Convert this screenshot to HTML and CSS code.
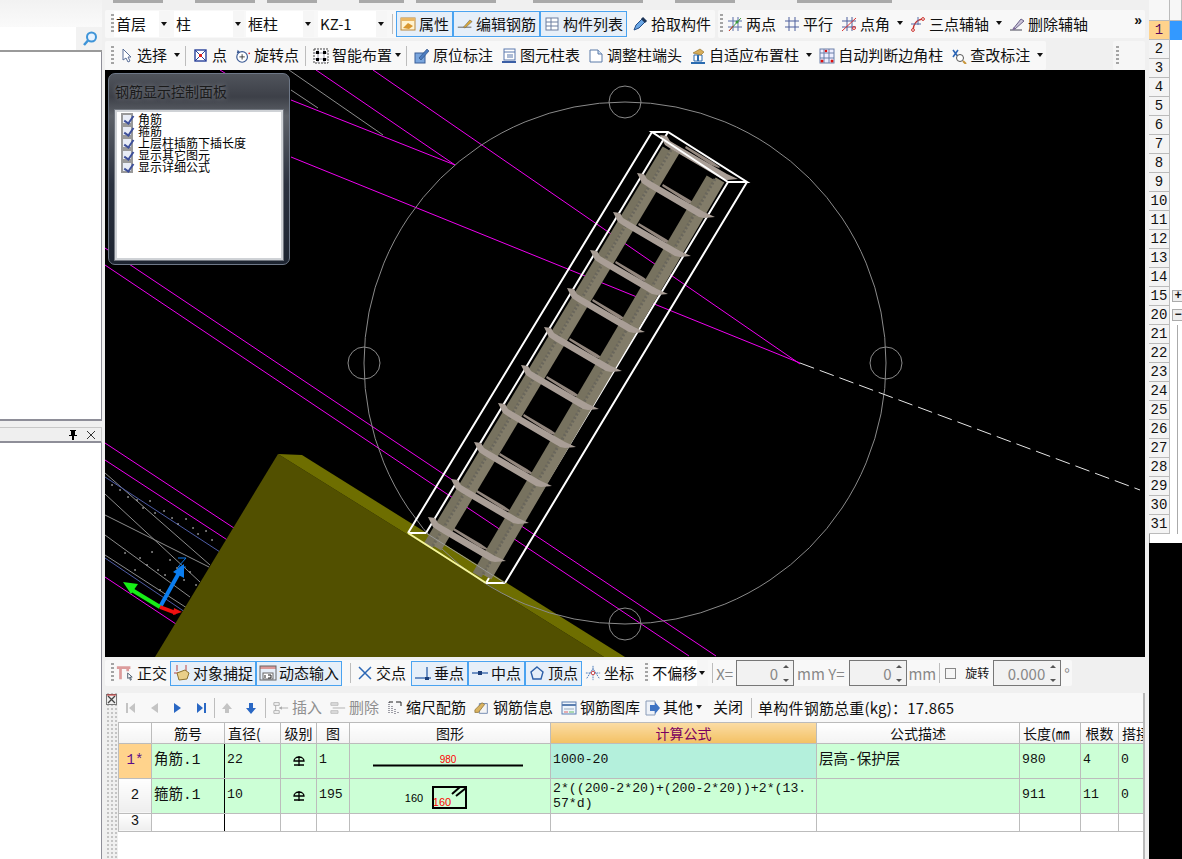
FILE: index.html
```html
<!DOCTYPE html>
<html lang="zh">
<head>
<meta charset="utf-8">
<title>钢筋三维</title>
<link rel="stylesheet" href="styles.css">
</head>
<body>
<svg class="defs" width="0" height="0">
  <defs>
    <symbol id="i-attr" viewBox="0 0 16 16"><rect x="1" y="2" width="14" height="12" fill="#fff3d0" stroke="#b9863a"/><rect x="1" y="2" width="14" height="3" fill="#e9b765"/><path d="M3 12l5-5 5 3-4 3z" fill="#d9972f"/></symbol>
    <symbol id="i-edit" viewBox="0 0 20 16"><path d="M1 12h17" stroke="#444" fill="none"/><path d="M8 12l8-9 3 2-9 8z" fill="#d8a93c" stroke="#555" stroke-width=".6"/></symbol>
    <symbol id="i-list" viewBox="0 0 16 16"><rect x="2" y="2" width="12" height="12" fill="#fff" stroke="#6c7fa0"/><path d="M7 2v12M2 6h12M2 10h12" stroke="#6c7fa0"/></symbol>
    <symbol id="i-pick" viewBox="0 0 16 16"><path d="M2 14l2-5 6-6 3 3-6 6z" fill="#6aa7e6" stroke="#244e88"/><path d="M10 2l4 4" stroke="#1d3558" stroke-width="3"/></symbol>
    <symbol id="i-two" viewBox="0 0 16 16"><path d="M1 5h14M1 11h14M6 1v14M11 1v14" stroke="#5b6ea8" fill="none"/><path d="M2 15L14 2" stroke="#3c9a3c"/><path d="M2 15l4-5" stroke="#d33"/><circle cx="10" cy="6" r="1.5" fill="#3a9a3a"/></symbol>
    <symbol id="i-par" viewBox="0 0 16 16"><path d="M1 5h14M1 11h14M5 1v14M11 1v14" stroke="#4d5f9c" fill="none"/></symbol>
    <symbol id="i-ang" viewBox="0 0 16 16"><path d="M1 5h14M1 11h14M6 1v14M11 1v14" stroke="#4d5f9c" fill="none"/><path d="M1 15L15 2" stroke="#d33"/><circle cx="13" cy="12" r="1.5" fill="none" stroke="#d33"/></symbol>
    <symbol id="i-arc" viewBox="0 0 16 16"><path d="M3 15C3 8 7 3 14 3" stroke="#c9302c" fill="none" stroke-width="1.3"/><path d="M1 8h10M8 1v8" stroke="#5b6ea8"/><circle cx="3" cy="14" r="1.4" fill="#fff" stroke="#c9302c"/><circle cx="13" cy="3" r="1.4" fill="#fff" stroke="#c9302c"/></symbol>
    <symbol id="i-del" viewBox="0 0 16 16"><path d="M1 14h12" stroke="#445"/><path d="M4 13l8-10 3 2-9 8z" fill="#c8c2d8" stroke="#6b6288"/><path d="M3 14l2-3 2 2z" fill="#7f6b9b"/></symbol>
    <symbol id="i-sel" viewBox="0 0 16 16"><path d="M5 1v11l3-2 2 4 2-1-2-4h3z" fill="#fff" stroke="#5a6f98"/></symbol>
    <symbol id="i-pt" viewBox="0 0 16 16"><rect x="2" y="2" width="11" height="11" fill="#fff" stroke="#29409a" stroke-width="1.4"/><path d="M2 2l11 11M13 2L2 13" stroke="#29409a"/><rect x="6" y="6" width="3" height="3" fill="#d22"/></symbol>
    <symbol id="i-rot" viewBox="0 0 18 16"><circle cx="8" cy="9" r="6" fill="#fff" stroke="#3b5a94" stroke-width="1.3"/><path d="M8 6v6M5 9h6" stroke="#333"/><path d="M3 1l3 3-4 1z" fill="#3b5a94"/><circle cx="16" cy="5" r="1" fill="#d33"/></symbol>
    <symbol id="i-smart" viewBox="0 0 16 16"><rect x="1" y="1" width="14" height="14" fill="#fff" stroke="#444" stroke-dasharray="2 1"/><path d="M5 1v14M11 1v14M1 5h14M1 11h14" stroke="#99a"/><rect x="3" y="3" width="3" height="3"/><rect x="10" y="3" width="3" height="3"/><rect x="3" y="10" width="3" height="3"/><rect x="10" y="10" width="3" height="3"/></symbol>
    <symbol id="i-mark" viewBox="0 0 16 16"><rect x="1" y="5" width="10" height="10" fill="#7aa6de" stroke="#3a5f98"/><path d="M5 10l8-9 2 2-8 9z" fill="#4c7cc0" stroke="#28497c" stroke-width=".6"/></symbol>
    <symbol id="i-tab" viewBox="0 0 16 16"><rect x="3" y="1" width="11" height="11" fill="#fff" stroke="#5a79ad"/><path d="M3 4h11M6 7h6M6 9h6" stroke="#5a79ad"/><path d="M1 13h14v2H1z" fill="#3b5fa5"/></symbol>
    <symbol id="i-end" viewBox="0 0 16 16"><path d="M2 2h8l4 4v8H2z" fill="#fff" stroke="#5b7ba8"/><path d="M10 2v4h4" fill="#cfe0f4" stroke="#5b7ba8"/></symbol>
    <symbol id="i-adapt" viewBox="0 0 16 16"><path d="M4 7h8v6H4z" fill="#fff" stroke="#2a6bb0"/><path d="M1 14h14v2H1zM7 7h2v6H7z" fill="#2a6bb0"/><path d="M3 5l7-4 4 3-3 3z" fill="#d7ad5a" stroke="#8c6a22" stroke-width=".6"/></symbol>
    <symbol id="i-corner" viewBox="0 0 16 16"><rect x="1" y="1" width="14" height="14" fill="#eef" stroke="#6a7fa8"/><path d="M5 1v14M10 1v14M1 5h14M1 10h14" stroke="#6a7fa8"/><circle cx="7" cy="3" r="1.3" fill="#d11"/><circle cx="3" cy="13" r="1.5" fill="#d11"/><circle cx="13" cy="13" r="1.5" fill="#d11"/></symbol>
    <symbol id="i-check" viewBox="0 0 16 16"><path d="M2 2l6 8M2 9l5-7" stroke="#2d66b5" stroke-width="1.6"/><circle cx="9" cy="10" r="3.5" fill="#fff" stroke="#555"/><path d="M12 13l3 3" stroke="#c9973c" stroke-width="2"/></symbol>
    <symbol id="i-ortho" viewBox="0 0 20 18"><path d="M1 3h15M5 3v13M13 3v4" stroke="#dc9c9c" stroke-width="3" fill="none"/><path d="M13 9v6l2-1 1 3 1-.5-1-3h2z" fill="#fff" stroke="#456"/></symbol>
    <symbol id="i-snap" viewBox="0 0 18 18"><path d="M4 1v6M13 1v6M1 9h9" stroke="#b44" fill="none"/><path d="M4 9l8-3 4 3-2 6-8 1z" fill="#e9cf88" stroke="#8d7330"/></symbol>
    <symbol id="i-dyn" viewBox="0 0 18 18"><rect x="1" y="2" width="16" height="3" fill="#d99"/><rect x="1" y="2" width="16" height="14" fill="none" stroke="#666"/><rect x="4" y="9" width="10" height="6" fill="#fff" stroke="#666"/><path d="M6 11v3M9 11h3v3h-3" stroke="#222" fill="none"/></symbol>
    <symbol id="i-cross" viewBox="0 0 16 16"><path d="M2 2l12 12M14 2L2 14" stroke="#2c67b5" stroke-width="1.5"/></symbol>
    <symbol id="i-perp" viewBox="0 0 16 16"><path d="M0 13h16" stroke="#2c5fa8" stroke-width="1.3"/><path d="M12 2v11" stroke="#2c5fa8" stroke-width="1.3"/><rect x="10" y="12" width="4" height="3" fill="#1d3f7a"/></symbol>
    <symbol id="i-mid" viewBox="0 0 16 16"><path d="M0 8h16" stroke="#2c5fa8" stroke-width="1.3"/><rect x="6" y="6" width="4" height="4" fill="#1d3f7a"/></symbol>
    <symbol id="i-top" viewBox="0 0 16 16"><path d="M8 2l6 5-2 7H4L2 7z" fill="none" stroke="#2c5fa8" stroke-width="1.4"/></symbol>
    <symbol id="i-coord" viewBox="0 0 18 18"><path d="M2 15l7-11 7 11" fill="none" stroke="#3a6fb5" stroke-dasharray="2 1"/><path d="M1 9h16M9 1v16" stroke="#3a6fb5" stroke-dasharray="2 1"/><circle cx="9" cy="9" r="2" fill="#fff" stroke="#c33"/></symbol>
    <symbol id="i-first" viewBox="0 0 12 14"><path d="M2 2h2v10H2z"/><path d="M11 2v10L5 7z"/></symbol>
    <symbol id="i-prev" viewBox="0 0 12 14"><path d="M10 2v10L3 7z"/></symbol>
    <symbol id="i-next" viewBox="0 0 12 14"><path d="M2 2v10l7-5z"/></symbol>
    <symbol id="i-last" viewBox="0 0 12 14"><path d="M1 2v10l6-5z"/><path d="M8 2h2v10H8z"/></symbol>
    <symbol id="i-up" viewBox="0 0 12 14"><path d="M6 2l5 6H8v4H4V8H1z"/></symbol>
    <symbol id="i-down" viewBox="0 0 12 14"><path d="M4 2h4v5h3l-5 6-5-6h3z"/></symbol>
    <symbol id="i-ins" viewBox="0 0 18 16"><path d="M1 2h6v3H1zM1 11h6v3H1z" fill="none" stroke="#aaa"/><path d="M7 8h10M3 5v6" stroke="#aaa" fill="none"/><path d="M7 8l3-2v4z" fill="#aaa"/></symbol>
    <symbol id="i-rem" viewBox="0 0 18 16"><path d="M1 2h8v3H1zM1 11h8v3H1z" fill="#ddd" stroke="#bbb"/><path d="M3 8h14" stroke="#aaa"/></symbol>
    <symbol id="i-scale" viewBox="0 0 16 16"><path d="M2 2v12M5 6v8M8 9v5M11 12v2" stroke="#445" stroke-dasharray="1 1"/><path d="M2 2h4M9 2h5v4" stroke="#222" fill="none"/></symbol>
    <symbol id="i-info" viewBox="0 0 18 16"><path d="M6 3l9 0v11H6z" fill="#f4f4f4" stroke="#6b84ad"/><path d="M1 10l8-8 3 2-7 9H1z" fill="#d9b361" stroke="#7a5f22" stroke-width=".7"/></symbol>
    <symbol id="i-lib" viewBox="0 0 16 16"><rect x="1" y="2" width="14" height="12" fill="#eef4fb" stroke="#5c7fb0"/><path d="M1 5h14" stroke="#5c7fb0" stroke-width="2"/><path d="M3 9h10" stroke="#9ab"/><path d="M3 12h4" stroke="#d66"/><path d="M8 12h5" stroke="#6b6"/></symbol>
    <symbol id="i-other" viewBox="0 0 16 16"><path d="M2 1h9v14H2z" fill="#eef2f8" stroke="#8a9cb8"/><path d="M6 5h5V2l5 6-5 6v-3H6z" fill="#3f74c4"/></symbol>
    <path id="st-back" d="M26 11l27 16 7 5-1 1-8-3-26-17z" fill="#93877e"/>
    <path id="st-front" d="M0 0l7 1 3 5 5 3 52 30 11 5-11 1-5-1-51-30-6-4z" fill="#a99e96"/>
  </defs>
</svg>

<div class="app">
  <aside class="left">
    <div class="left-top"></div>
    <div class="search">
      <div class="search-input"></div>
      <svg class="search-ic" width="18" height="18" viewBox="0 0 18 18"><circle cx="10.5" cy="7" r="4.5" fill="#e7f3ff" stroke="#3e94d8" stroke-width="2"/><path d="M7 10.500l-4 4.500" stroke="#3e94d8" stroke-width="2.500"/></svg>
    </div>
    <div class="pane pane-a"></div>
    <div class="pane-head">
      <svg width="10" height="10" viewBox="0 0 10 10"><path d="M2 0h6v1H7v4h2v1H6v4H4V6H1V5h2V1H2z"/></svg>
      <svg width="10" height="10" viewBox="0 0 10 10"><path d="M1 1l8 8M9 1L1 9" stroke="#333" fill="none"/></svg>
    </div>
    <div class="pane pane-b"></div>
  </aside>

  <main class="main">
    <div class="clip-strip">
      <span class="bit b1"></span><span class="bit b2"></span><span class="bit b3"></span><span class="bit b4"></span><span class="bit b5"></span><span class="bit b6"></span><span class="bit b7"></span><span class="bit b8"></span>
    </div>

    <div class="row-1">
      <div class="bar bar-a">
        <i class="grip"></i>
        <div class="combo w56"><span>首层</span><b></b></div>
        <div class="combo w71"><span>柱</span><b></b></div>
        <div class="combo w68"><span>框柱</span><b></b></div>
        <div class="combo w69"><span>KZ-1</span><b></b></div>
        <i class="sep"></i>
        <button class="btn on"><svg class="ic"><use href="#i-attr"/></svg>属性</button>
        <button class="btn on"><svg class="ic"><use href="#i-edit"/></svg>编辑钢筋</button>
        <button class="btn on"><svg class="ic"><use href="#i-list"/></svg>构件列表</button>
        <button class="btn pick"><svg class="ic"><use href="#i-pick"/></svg>拾取构件</button>
      </div>
      <div class="bar bar-b">
        <i class="grip"></i>
        <button class="btn flat"><svg class="ic"><use href="#i-two"/></svg>两点</button>
        <button class="btn flat"><svg class="ic"><use href="#i-par"/></svg>平行</button>
        <button class="btn flat"><svg class="ic"><use href="#i-ang"/></svg>点角<u class="arrow"></u></button>
        <button class="btn flat"><svg class="ic"><use href="#i-arc"/></svg>三点辅轴<u class="arrow"></u></button>
        <button class="btn flat"><svg class="ic"><use href="#i-del"/></svg>删除辅轴</button>
        <span class="more">»</span>
      </div>
    </div>

    <div class="row-2">
      <div class="bar bar-c">
        <i class="grip"></i>
        <button class="btn flat"><svg class="ic"><use href="#i-sel"/></svg>选择<u class="arrow"></u></button>
        <i class="sep"></i>
        <button class="btn flat"><svg class="ic"><use href="#i-pt"/></svg>点</button>
        <button class="btn flat"><svg class="ic"><use href="#i-rot"/></svg>旋转点</button>
        <i class="sep"></i>
        <button class="btn flat"><svg class="ic"><use href="#i-smart"/></svg>智能布置<u class="arrow mini"></u></button>
        <i class="sep"></i>
        <button class="btn flat"><svg class="ic"><use href="#i-mark"/></svg>原位标注</button>
        <button class="btn flat"><svg class="ic"><use href="#i-tab"/></svg>图元柱表</button>
        <button class="btn flat"><svg class="ic"><use href="#i-end"/></svg>调整柱端头</button>
        <button class="btn flat"><svg class="ic"><use href="#i-adapt"/></svg>自适应布置柱<u class="arrow"></u></button>
        <button class="btn flat"><svg class="ic"><use href="#i-corner"/></svg>自动判断边角柱</button>
        <button class="btn flat"><svg class="ic"><use href="#i-check"/></svg>查改标注<u class="arrow"></u></button>
      </div>
      <div class="bar bar-d"><i class="grip"></i></div>
    </div>

    <div class="canvas">
      <svg class="scene" width="1040" height="587" viewBox="105 70 1040 587">
        <rect x="105" y="70" width="1040" height="587" fill="#000"/>
        <g class="mag">
          <path d="M373 70L800 364M291 157L800 363"/>
          <path d="M316 70L455 165M291 100L455 165M220 70L228 75"/>
          <path d="M105 265L689 656M105 248L716 656"/>
          <path d="M105 443L240 532M105 460L232 543M105 577L176 624"/>
        </g>
        <g class="gray">
          <path d="M289 70L383 135M291 90L318 108"/>
          <path d="M105 473L210 565M105 494L200 582M105 515L209 567M105 535L190 597M105 555L190 610"/>
        </g>
        <g class="blue">
          <path d="M105 477L220 552M105 558L185 612"/>
        </g>
        <path class="dots" d="M112 485h.1M120 490h.1M128 497h.1M137 500h.1M143 508h.1M150 501h.1M155 513h.1M164 511h.1M172 518h.1M178 524h.1M186 519h.1M193 528h.1M198 534h.1M206 531h.1M212 540h.1M140 558h.1M147 565h.1M152 552h.1M158 570h.1M165 575h.1M170 560h.1M177 568h.1M184 580h.1M190 572h.1M196 585h.1M135 570h.1M125 553h.1M160 590h.1"/>

        <polygon points="278,454 155,657 604,657" fill="#525000"/>
        <polygon points="278,454 302,455 625,657 604,657" fill="#6e6e00"/>

        <circle class="ring" cx="625" cy="363" r="261"/>
        <circle class="ring" cx="625" cy="102" r="16"/>
        <circle class="ring" cx="364" cy="363" r="16"/>
        <circle class="ring" cx="886" cy="363" r="16"/>
        <circle class="ring" cx="625" cy="624" r="16"/>

        <path class="dash" d="M800 363L1140 490"/>

        <g class="wire">
          <path d="M668 132L426 533M728 182L486 583"/>
        </g>
        <use href="#st-back" x="660" y="135"/>
        <use href="#st-back" x="637" y="173"/>
        <use href="#st-back" x="613" y="212"/>
        <use href="#st-back" x="590" y="250"/>
        <use href="#st-back" x="567" y="288"/>
        <use href="#st-back" x="544" y="327"/>
        <use href="#st-back" x="521" y="365"/>
        <use href="#st-back" x="498" y="403"/>
        <use href="#st-back" x="474" y="442"/>
        <use href="#st-back" x="451" y="479"/>
        <use href="#st-back" x="428" y="517"/>
        <g class="bar1"><path d="M667 149L428 546"/><path d="M675 151L437 548"/><path class="grain" d="M671 150L432 547"/></g>
        <g class="bar1"><path d="M711 178L477 575"/><path d="M720 180L487 577"/><path class="grain" d="M715 179L482 576"/></g>
        <use href="#st-front" x="660" y="135"/>
        <use href="#st-front" x="637" y="173"/>
        <use href="#st-front" x="613" y="212"/>
        <use href="#st-front" x="590" y="250"/>
        <use href="#st-front" x="567" y="288"/>
        <use href="#st-front" x="544" y="327"/>
        <use href="#st-front" x="521" y="365"/>
        <use href="#st-front" x="498" y="403"/>
        <use href="#st-front" x="474" y="442"/>
        <use href="#st-front" x="451" y="479"/>
        <use href="#st-front" x="428" y="517"/>
        <g class="wire">
          <path d="M652 132L408 533M747 182L505 583"/>
          <path d="M652 132H668L747 182H728Z"/>
          <path d="M408 533H426M486 583H505"/>
          <path d="M426 533L505 583" class="faint"/>
        </g>
        <path d="M408 533L486 583" stroke="#f5f59a" stroke-width="2" fill="none"/>

        <g class="axis">
          <path d="M160 607L180 571" stroke="#0a7df0" stroke-width="4"/>
          <path d="M184 564L173 572 184 578z" fill="#0a7df0"/>
          <path d="M178 558h8l-8 9h8" stroke="#0a7df0" fill="none"/>
          <path d="M160 607L132 590" stroke="#17ee17" stroke-width="4"/>
          <path d="M123 582L138 584 131 594z" fill="#17ee17"/>
          <path d="M160 607L176 613" stroke="#f01010" stroke-width="4"/>
          <path d="M182 612l-8-4-1 7z" fill="#f01010"/>
        </g>
      </svg>

      <section class="float-panel">
        <h2 class="float-title">钢筋显示控制面板</h2>
        <ul class="check-list">
          <li><i class="cb"></i>角筋</li>
          <li><i class="cb"></i>箍筋</li>
          <li><i class="cb"></i>上层柱插筋下插长度</li>
          <li><i class="cb"></i>显示其它图元</li>
          <li><i class="cb"></i>显示详细公式</li>
        </ul>
      </section>
    </div>

    <div class="row-3">
      <div class="bar bar-e">
        <i class="grip"></i>
        <button class="btn flat"><svg class="ic wide"><use href="#i-ortho"/></svg>正交</button>
        <button class="btn on wd lead"><svg class="ic wide"><use href="#i-snap"/></svg>对象捕捉</button>
        <button class="btn on wd"><svg class="ic wide"><use href="#i-dyn"/></svg>动态输入</button>
        <i class="sep s1"></i>
        <button class="btn flat"><svg class="ic"><use href="#i-cross"/></svg>交点</button>
        <button class="btn on lead gap2"><svg class="ic"><use href="#i-perp"/></svg>垂点</button>
        <button class="btn on"><svg class="ic"><use href="#i-mid"/></svg>中点</button>
        <button class="btn on"><svg class="ic"><use href="#i-top"/></svg>顶点</button>
        <button class="btn flat"><svg class="ic"><use href="#i-coord"/></svg>坐标</button>
        <i class="grip g2"></i>
        <div class="combo w58"><span>不偏移</span><b></b></div>
        <i class="sep"></i>
        <span class="dim">X=</span>
        <div class="spin w58"><span>0</span><em></em></div>
        <span class="dim">mm Y=</span>
        <div class="spin w58 sp2"><span>0</span><em></em></div>
        <span class="dim mm2">mm</span>
        <i class="sep"></i>
        <i class="box"></i>
        <span class="small">旋转</span>
        <div class="spin w68"><span>0.000</span><em></em></div>
        <span class="dim">°</span>
      </div>
    </div>

    <div class="lower">
      <div class="dock-grip"><svg width="11" height="11" viewBox="0 0 11 11"><rect x=".5" y=".5" width="10" height="10" fill="#eee" stroke="#777"/><path d="M2 2l7 7M9 2L2 9" stroke="#444" stroke-width="1.300"/><path d="M1 1h9" stroke="#c33"/></svg></div>
      <div class="lower-body">
        <div class="bar bar-f">
          <button class="nav off"><svg><use href="#i-first"/></svg></button>
          <button class="nav off"><svg><use href="#i-prev"/></svg></button>
          <button class="nav go"><svg><use href="#i-next"/></svg></button>
          <button class="nav go"><svg><use href="#i-last"/></svg></button>
          <i class="sep"></i>
          <button class="nav off"><svg><use href="#i-up"/></svg></button>
          <button class="nav go"><svg><use href="#i-down"/></svg></button>
          <i class="sep s3"></i>
          <button class="btn flat mute"><svg class="ic"><use href="#i-ins"/></svg>插入</button>
          <button class="btn flat mute"><svg class="ic"><use href="#i-rem"/></svg>删除</button>
          <button class="btn flat"><svg class="ic"><use href="#i-scale"/></svg>缩尺配筋</button>
          <button class="btn flat"><svg class="ic"><use href="#i-info"/></svg>钢筋信息</button>
          <button class="btn flat lib"><svg class="ic"><use href="#i-lib"/></svg>钢筋图库</button>
          <button class="btn flat oth"><svg class="ic"><use href="#i-other"/></svg>其他<u class="arrow mini"></u></button>
          <button class="btn flat"><span>关闭</span></button>
          <i class="sep"></i>
          <span class="total">单构件钢筋总重(kg)：17.865</span>
        </div>
        <div class="table-wrap">
          <table class="grid">
            <colgroup>
              <col class="c0"><col class="c1"><col class="c2"><col class="c3"><col class="c4"><col class="c5"><col class="c6"><col class="c7"><col class="c8"><col class="c9"><col class="c10">
            </colgroup>
            <thead>
              <tr>
                <th></th><th>筋号</th><th class="cut">直径(</th><th>级别</th><th>图</th><th>图形</th><th class="cur">计算公式</th><th>公式描述</th><th class="cut">长度(㎜</th><th>根数</th><th class="cut">搭接</th>
              </tr>
            </thead>
            <tbody>
              <tr class="r1">
                <th class="now">1*</th><td>角筋.1</td><td>22</td><td class="mid"><svg class="grade" width="14" height="12" viewBox="0 0 14 12"><path d="M2 6a5 4 0 0 1 10 0zM7 1v10M2 10h10" fill="none" stroke="#000" stroke-width="1.300"/></svg></td><td>1</td>
                <td class="fig"><svg width="200" height="34" viewBox="0 0 200 34"><text x="98" y="19" class="red">980</text><path d="M23 21.500H173" stroke="#000" stroke-width="2"/></svg></td>
                <td class="sel">1000-20</td><td>层高-保护层</td><td>980</td><td>4</td><td>0</td>
              </tr>
              <tr class="r2">
                <th>2</th><td>箍筋.1</td><td>10</td><td class="mid"><svg class="grade" width="14" height="12" viewBox="0 0 14 12"><path d="M2 6a5 4 0 0 1 10 0zM7 1v10M2 10h10" fill="none" stroke="#000" stroke-width="1.300"/></svg></td><td>195</td>
                <td class="fig"><svg width="200" height="34" viewBox="0 0 200 34"><text x="64" y="23" class="blk">160</text><rect x="83" y="8" width="33" height="21" fill="none" stroke="#000" stroke-width="2"/><path d="M116 9l-10 8M110 8l-8 7" stroke="#000" stroke-width="2"/><text x="92" y="27" class="red big">160</text></svg></td>
                <td class="wrap">2*((200-2*20)+(200-2*20))+2*(13.57*d)</td><td></td><td>911</td><td>11</td><td>0</td>
              </tr>
              <tr class="r3">
                <th>3</th><td></td><td></td><td></td><td></td><td></td><td></td><td></td><td></td><td></td><td></td>
              </tr>
            </tbody>
          </table>
        </div>
      </div>
    </div>
  </main>

  <aside class="sheet">
    <div class="sheet-rows">
      <div class="s-head"><span></span><span></span></div>
      <div class="s-row cur"><span>1</span><span></span></div>
      <div class="s-row"><span>2</span><span></span></div>
      <div class="s-row"><span>3</span><span></span></div>
      <div class="s-row"><span>4</span><span></span></div>
      <div class="s-row"><span>5</span><span></span></div>
      <div class="s-row"><span>6</span><span></span></div>
      <div class="s-row"><span>7</span><span></span></div>
      <div class="s-row"><span>8</span><span></span></div>
      <div class="s-row"><span>9</span><span></span></div>
      <div class="s-row"><span>10</span><span></span></div>
      <div class="s-row"><span>11</span><span></span></div>
      <div class="s-row"><span>12</span><span></span></div>
      <div class="s-row"><span>13</span><span></span></div>
      <div class="s-row"><span>14</span><span></span></div>
      <div class="s-row"><span>15</span><span><i class="tree">+</i></span></div>
      <div class="s-row"><span>20</span><span><i class="tree">−</i></span></div>
      <div class="s-row line"><span>21</span><span></span></div>
      <div class="s-row line"><span>22</span><span></span></div>
      <div class="s-row line"><span>23</span><span></span></div>
      <div class="s-row line"><span>24</span><span></span></div>
      <div class="s-row line"><span>25</span><span></span></div>
      <div class="s-row line"><span>26</span><span></span></div>
      <div class="s-row line"><span>27</span><span></span></div>
      <div class="s-row line"><span>28</span><span></span></div>
      <div class="s-row line"><span>29</span><span></span></div>
      <div class="s-row line"><span>30</span><span></span></div>
      <div class="s-row line"><span>31</span><span></span></div>
    </div>
  </aside>
</div>
</body>
</html>
```
FILE: styles.css
```css
* { box-sizing: border-box; }
html, body { margin: 0; padding: 0; width: 1182px; height: 859px; overflow: hidden; background: #000; }
body { font: 15px/1 "Noto Sans CJK SC", "Liberation Sans", sans-serif; color: #111; }
.defs { position: absolute; }
.app { display: flex; width: 1182px; height: 859px; }

/* left dock */
.left { width: 105px; height: 859px; flex: none; background: #f0f0f0; display: flex; flex-direction: column; padding-right: 3px; }
.left-top { height: 27px; background: linear-gradient(#f2f2f2, #fafafa); }
.search { height: 25px; display: flex; align-items: center; background: #f2f2f2; border-bottom: 2px solid #9a9a9a; }
.search-input { width: 76px; height: 23px; background: #fff; }
.search-ic { margin-left: 5px; }
.pane { background: #fff; border-right: 1px solid #8e8e98; }
.pane-a { height: 369px; border-bottom: 2px solid #8e8e98; }
.pane-head { height: 16px; margin-top: 6px; display: flex; align-items: center; justify-content: flex-end; gap: 8px; padding-right: 5px; background: #efefef; border-top: 1px solid #c8c8c8; border-bottom: 2px solid #8e8e98; border-right: 1px solid #c8c8c8; }
.pane-b { flex: 1; }

/* main column */
.main { width: 1040px; height: 859px; flex: none; display: flex; flex-direction: column; background: #f0f0f0; }
.clip-strip { height: 10px; display: flex; gap: 12px; padding: 0 0 0 8px; }
.bit { display: block; height: 3px; background: #a9a9a9; }
.b1 { width: 50px; } .b2 { width: 60px; margin-left: 20px; } .b3 { width: 50px; } .b4 { width: 45px; margin-left: 30px; }
.b5 { width: 80px; } .b6 { width: 110px; margin-left: 25px; } .b7 { width: 60px; margin-left: 20px; } .b8 { width: 95px; margin-left: 50px; }

.bar { display: flex; align-items: center; background: #f8f8f8; border-radius: 2px; height: 100%; }
.row-1 { height: 28px; display: flex; gap: 3px; }
.row-2 { height: 29px; margin-top: 3px; display: flex; justify-content: space-between; }
.row-3 { height: 33px; padding: 3px 0 4px; }
.bar-a { width: 610px; padding-left: 6px; }
.bar-b { flex: 1; padding-left: 2px; gap: 8px; position: relative; }
.bar-c { width: 941px; padding-left: 6px; gap: 8px; }
.bar-d { width: 32px; padding-left: 3px; background: #f6f6f6; }
.bar-e { width: 967px; padding-left: 6px; gap: 3px; }
.bar-f { height: 29px; padding-left: 0; }

.grip { display: block; width: 3px; height: 20px; flex: none; background: repeating-linear-gradient(#a4a4a4 0 2px, transparent 2px 4px); }
.sep { display: block; width: 1px; height: 20px; flex: none; background: #bdbdbd; }

.combo { height: 26px; display: flex; align-items: center; justify-content: space-between; background: #fff; font-size: 15px; padding-left: 2px; flex: none; }
.combo span { margin-top: -2px; white-space: nowrap; }
.combo b { display: block; width: 11px; height: 26px; background: #f6f6f6; position: relative; flex: none; }
.combo b::after { content: ""; position: absolute; left: 2px; top: 11px; border: 3px solid transparent; border-top: 4px solid #111; border-bottom: 0; }
.w56 { width: 56px; } .w71 { width: 70px; margin-left: 4px; } .w68 { width: 68px; margin-left: 2px; } .w69 { width: 69px; margin-left: 4px; }
.bar-a .sep { margin: 0 3px 0 5px; }
.bar-b .grip { margin-right: -4px; }
.bar-c > .grip { margin-right: -4px; }
.bar-c > .sep { margin: 0 -1px 0 -2px; }

.btn { font: inherit; color: inherit; background: none; border: 1px solid transparent; display: flex; align-items: center; gap: 3px; padding: 0 3px 2px; height: 26px; margin: 0; white-space: nowrap; flex: none; }
.btn.on { background: #e6eff9; border-color: #4aa3f0; }
.btn.flat { padding: 0 0 2px; border: 0; }
.btn.mute { color: #8f8f8f; }
.btn.pick { margin-left: 5px; padding: 0 0 2px; border: 0; }
.ic { width: 16px; height: 16px; flex: none; margin-top: 2px; }
.ic.wide { width: 18px; height: 18px; }
.arrow { display: block; width: 12px; height: 8px; position: relative; flex: none; }
.btn .arrow { margin-left: -3px; margin-right: 0; }
.arrow::after { content: ""; position: absolute; left: 7px; top: 2px; border: 3px solid transparent; border-top: 4px solid #111; border-bottom: 0; }
.btn .arrow.mini { width: 8px; margin-left: -3px; }
.arrow.mini::after { left: 3px; }
.more { position: absolute; right: 3px; top: 3px; font: bold 14px/1 "Liberation Sans", sans-serif; }

/* canvas */
.canvas { height: 587px; position: relative; background: #000; overflow: hidden; flex: none; }
.scene { display: block; }
.mag path { stroke: #f000f0; fill: none; }
.gray path { stroke: #8c8c8c; fill: none; }
.blue path { stroke: #4e5ca6; fill: none; }
.dots { stroke: #aaa; stroke-width: 1.500; stroke-linecap: square; fill: none; }
.ring { fill: none; stroke: #8a8a8a; }
.dash { stroke: #e6e6e6; stroke-dasharray: 15 6; fill: none; }
.wire path { stroke: #fff; stroke-width: 2; fill: none; }
.wire .faint { stroke: #999; stroke-width: 1; }
.bar1 path { stroke: #77725f; stroke-width: 10; fill: none; }
.bar1 path + path { stroke: #827c69; }
.bar1 .grain { stroke: #6a675c; stroke-width: 3; stroke-dasharray: 2 2; }

.float-panel { position: absolute; left: 3px; top: 3px; width: 182px; height: 192px; border: 1px solid #6e7888; border-radius: 7px; padding: 0 6px; background: linear-gradient(#50545c, #3d4048 12%, #5d6168 22%, #2b3240 58%, #1d2430); }
.float-title { margin: 8px 0 10px; font: 400 14px/18px "Noto Sans CJK SC", sans-serif; color: #1a1a1a; text-shadow: 0 0 5px #8a8e96; }
.check-list { margin: 0; list-style: none; height: 150px; padding: 1px 4px; background: #fff; border: 2px solid #cfd2d6; outline: 1px solid #70757e; }
.check-list li { height: 12px; display: flex; align-items: center; gap: 5px; font-size: 12px; line-height: 12px; color: #000; white-space: nowrap; }
.cb { display: block; width: 12px; height: 12px; flex: none; border: 2px solid #999; background: #e8ecf6; position: relative; }
.cb::after { content: ""; position: absolute; left: 3px; top: -1px; width: 4px; height: 8px; border: solid #3d4f9a; border-width: 0 2px 2px 0; transform: rotate(35deg); }

/* snap bar */
.bar-e > .grip:first-child { margin-right: -1px; }
.bar-e .btn { height: 25px; }
.bar-e .btn.on { margin-left: -3px; }
.bar-e .btn.wd { padding: 0 2px 2px; gap: 2px; }
.bar-e .btn.lead { margin-left: 0; }
.bar-e .btn.gap2 { margin-left: 2px; }
.bar-e > .sep { margin: 0; }
.bar-e > .sep.s1 { margin: 0 3px 0 5px; }
.bar-e > .g2 { margin: 0 -1px 0 8px; }
.bar-e .combo { height: 26px; width: 58px; margin: 0 1px 0 0; overflow: hidden; }
.dim { color: #888; white-space: nowrap; flex: none; }
.dim.mm2 { margin-left: -2px; }
.small { font-size: 12px; margin: 0 1px 0 6px; white-space: nowrap; flex: none; }
.box { display: block; width: 11px; height: 11px; border: 1px solid #888; background: #f6f6f6; flex: none; margin-left: 2px; }
.spin { height: 26px; border: 1px solid #777; background: #f2f2f2; color: #888; display: flex; align-items: center; justify-content: flex-end; padding-right: 15px; position: relative; flex: none; }
.spin.w58 { width: 58px; margin: 0; }
.spin.w58.sp2 { margin-left: 2px; }
.spin.w68 { width: 68px; margin: 0; }
.spin em { position: absolute; right: 3px; top: 3px; width: 8px; height: 18px; }
.spin em::before, .spin em::after { content: ""; position: absolute; left: 1px; border: 3px solid transparent; }
.spin em::before { top: 1px; border-bottom: 3px solid #555; border-top: 0; }
.spin em::after { bottom: 0; border-top: 3px solid #555; border-bottom: 0; }

/* lower */
.lower { flex: 1; display: flex; min-height: 0; padding-top: 3px; }
.dock-grip { width: 13px; padding: 1px 0 0 1px; background: #f0f0f0 radial-gradient(circle, #c4c4c4 1px, transparent 1.200px) 1px 10px / 4px 4px; flex: none; }
.dock-grip svg { display: block; }
.lower-body { width: 1027px; flex: none; display: flex; flex-direction: column; min-height: 0; border-right: 2px solid #b8b8b8; }
.nav { width: 24px; height: 24px; padding: 0; border: 0; background: none; display: flex; align-items: center; justify-content: center; flex: none; }
.nav svg { width: 12px; height: 14px; }
.nav.off { fill: #c4c4c4; }
.nav.go { fill: #2a68c4; }
.bar-f .sep.s3 { margin: 0 7px 0 2px; }
.bar-f .btn { margin-right: 8px; }
.bar-f .btn.lib { margin-right: 4px; }
.bar-f .btn.oth { margin-right: 12px; }
.total { margin-left: 6px; white-space: nowrap; letter-spacing: .2px; }

.table-wrap { flex: 1; background: #fff; border-top: 1px solid #bbb; }
.grid { border-collapse: collapse; table-layout: fixed; width: 1025px; font: 14px/1.100 "Liberation Mono", "Noto Sans CJK SC", monospace; }
.c0 { width: 33px; } .c1 { width: 73px; } .c2 { width: 56px; } .c3 { width: 36px; } .c4 { width: 33px; } .c5 { width: 201px; } .c6 { width: 266px; } .c7 { width: 203px; } .c8 { width: 61px; } .c9 { width: 38px; } .c10 { width: 25px; }
.grid th, .grid td { border: 1px solid #bcbcbc; padding: 0 2px; overflow: hidden; white-space: nowrap; }
.grid thead th { height: 20px; font: 400 14px/18px "Noto Sans CJK SC", sans-serif; background: linear-gradient(#fff, #f3f3f3); text-align: center; border-top: 0; padding: 0; }
.grid thead th.cur { background: linear-gradient(#fbdca4, #f3c164); color: #7a0060; }
.grid thead th.cut { text-align: left; padding-left: 3px; }
.grid tbody th { font-weight: 400; text-align: center; background: linear-gradient(#fff, #eee); }
.grid tbody th.now { background: #ffd38c; color: #5a0a8a; }
.grid td { font-size: 13.200px; }
.grid td:nth-child(2), .grid td:nth-child(8) { font: 14.500px/1.100 "Liberation Mono", "Noto Sans CJK SC", monospace; }
.grid tbody td:nth-child(2) { border-right-color: #000; }
.r1 td, .r2 td { background: #ccffd6; }
.r1 { height: 35px; } .r2 { height: 35px; } .r3 { height: 18px; }
.r1 td.sel { background: #b4f0dc; }
.grid td.wrap { white-space: normal; word-break: break-all; line-height: 15px; padding: 2px 8px 0 2px; vertical-align: top; }
.grid td.mid { text-align: center; }
.grid td.fig { padding: 0; }
.grade { display: block; margin: 0 auto; }
.fig svg { display: block; }
.fig text { text-anchor: middle; font-family: "Liberation Sans", sans-serif; }
.red { fill: #f00; font-size: 10px; }
.red.big { font-size: 11px; }
.blk { fill: #000; font-size: 11px; }

/* sheet at the far right */
.sheet { width: 37px; height: 859px; flex: none; background: #000; border-left: 4px solid #f0f0f0; }
.sheet-rows { height: 543px; background: #fff; box-shadow: inset 1px 0 0 #999; }
.s-head, .s-row { display: grid; grid-template-columns: 21px 1fr; height: 19px; }
.s-head { height: 21px; background: #f7f7f7; }
.s-head span, .s-row span:first-child { border-right: 1px solid #bbb; border-bottom: 1px solid #bbb; }
.s-row span:first-child { background: #f4f4f4; font: 14px/18px "Liberation Mono", monospace; text-align: center; color: #111; }
.s-row.cur span:first-child { background: #ffd38c; color: #5a0a5a; }
.s-row.cur span:last-child { background: #3399ff; }
.tree { display: block; width: 12px; height: 12px; margin: 3px 0 0 2px; border: 1px solid #aaa; background: #eee; font: 700 12px/10px "Liberation Mono", monospace; text-align: center; }
.s-row.line span:last-child { background: linear-gradient(#aaa, #aaa) 7px 0 / 1px 100% no-repeat; }
```
